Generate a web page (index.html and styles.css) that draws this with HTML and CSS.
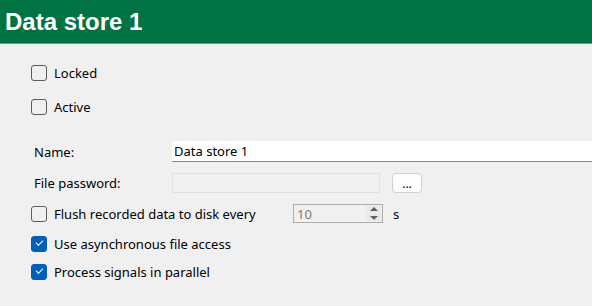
FILE: index.html
```html
<!DOCTYPE html>
<html lang="en">
<head>
    <meta charset="UTF-8">
    <title>Data store 1</title>
    <link rel="stylesheet" href="styles.css">
</head>
<body>
    <div class="header">
        <h1>Data store 1</h1>
    </div>

    <div class="form">
        <label class="check row-locked">
            <span class="box"></span>
            <span>Locked</span>
        </label>
        <label class="check row-active">
            <span class="box"></span>
            <span>Active</span>
        </label>

        <div class="field row-name">
            <span class="field-label">Name:</span>
            <div class="textbox">Data store 1</div>
        </div>
        <div class="field row-password">
            <span class="field-label">File password:</span>
            <div class="textbox disabled"></div>
            <button class="browse">...</button>
        </div>

        <div class="check row-flush">
            <span class="box"></span>
            <span class="flush-text">Flush recorded data to disk every</span>
            <div class="spinner">
                <span class="spin-value">10</span>
                <span class="spin-arrows">
                    <span class="arrow up"></span>
                    <span class="arrow down"></span>
                </span>
            </div>
            <span class="unit">s</span>
        </div>
        <label class="check row-async">
            <span class="box checked"></span>
            <span>Use asynchronous file access</span>
        </label>
        <label class="check row-parallel">
            <span class="box checked"></span>
            <span>Process signals in parallel</span>
        </label>
    </div>
</body>
</html>
```

FILE: styles.css
```css
body {
    margin: 0;
    background: #f0f0f0;
    font-family: "Noto Sans", "Liberation Sans", sans-serif;
    font-size: 13px;
    color: #000;
}

.header {
    background: #007243;
    height: 43px;
    border-bottom: 1px solid #8a8a8a;
    display: flex;
    align-items: center;
}

h1 {
    margin: 0 0 0 5px;
    color: #fff;
    font-family: "Liberation Sans", sans-serif;
    font-size: 24px;
    font-weight: bold;
}

.form {
    padding-top: 20px;
    display: flex;
    flex-direction: column;
}

.check {
    display: flex;
    align-items: center;
    padding-left: 31px;
}

.box {
    width: 14px;
    height: 14px;
    border: 1px solid #5c5c5c;
    border-radius: 3px;
    margin-right: 7px;
    flex-shrink: 0;
    position: relative;
}

.box.checked {
    background: #005fb8;
    border-color: #005fb8;
}

.box.checked::after {
    content: "";
    position: absolute;
    left: 4px;
    top: 3px;
    width: 6px;
    height: 3px;
    border-left: 1px solid #fff;
    border-bottom: 1px solid #fff;
    transform: rotate(-45deg);
}

.row-locked { height: 18px; }
.row-active { height: 18px; margin-top: 16px; }
.row-name { height: 21px; margin-top: 25px; }
.row-password { height: 20px; margin-top: 11px; }
.row-flush { height: 19px; margin-top: 11px; }
.row-async { height: 16px; margin-top: 13px; }
.row-parallel { height: 16px; margin-top: 12px; }

.field {
    display: flex;
    align-items: center;
    padding-left: 34px;
}

.field-label {
    width: 138px;
}

.textbox {
    flex: 1;
    height: 100%;
    box-sizing: border-box;
    background: #fff;
    border-bottom: 1px solid #868686;
    padding-left: 2px;
    display: flex;
    align-items: center;
}

.textbox.disabled {
    flex: 0 0 208px;
    background: #f0f0f0;
    border: 1px solid #e0e0e0;
}

.browse {
    margin-left: 12px;
    width: 30px;
    height: 20px;
    background: #fdfdfd;
    border: 1px solid #d0d0d0;
    border-radius: 4px;
    font-family: inherit;
    font-size: 12px;
    padding: 0;
    line-height: 20px;
}

.flush-text {
    width: 239px;
}

.spinner {
    width: 90px;
    height: 19px;
    box-sizing: border-box;
    border: 1px solid #acacac;
    display: flex;
    align-items: center;
    justify-content: space-between;
}

.spin-value {
    color: #7a7a7a;
    padding-left: 3px;
}

.spin-arrows {
    display: flex;
    flex-direction: column;
    gap: 1px;
    margin-right: 1px;
}

.arrow {
    width: 15px;
    height: 7px;
    background: #e8e8e8;
    position: relative;
}

.arrow::after {
    content: "";
    position: absolute;
    left: 4px;
    border-left: 4px solid transparent;
    border-right: 4px solid transparent;
}

.arrow.up::after {
    top: 1px;
    border-bottom: 4px solid #606060;
}

.arrow.down::after {
    top: 2px;
    border-top: 4px solid #606060;
}

.unit {
    margin-left: 10px;
}
```
